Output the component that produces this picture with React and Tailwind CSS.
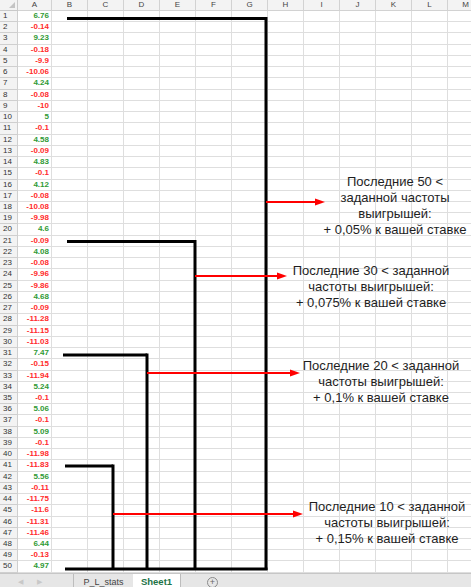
const values = [
  '6.76', '-0.14', '9.23', '-0.18', '-9.9', '-10.06', '4.24', '-0.08', '-10', '5',
  '-0.1', '4.58', '-0.09', '4.83', '-0.1', '4.12', '-0.08', '-10.08', '-9.98', '4.6',
  '-0.09', '4.08', '-0.08', '-9.96', '-9.86', '4.68', '-0.09', '-11.28', '-11.15', '-11.03',
  '7.47', '-0.15', '-11.94', '5.24', '-0.1', '5.06', '-0.1', '5.09', '-0.1', '-11.98',
  '-11.83', '5.56', '-0.11', '-11.75', '-11.6', '-11.31', '-11.46', '6.44', '-0.13', '4.97',
];

const cols = [
  { l: 'A', w: 'w-[34px]' },
  { l: 'B', w: 'w-[36px]' },
  { l: 'C', w: 'w-[36px]' },
  { l: 'D', w: 'w-[36px]' },
  { l: 'E', w: 'w-[36px]' },
  { l: 'F', w: 'w-[36px]' },
  { l: 'G', w: 'w-[36px]' },
  { l: 'H', w: 'w-[36px]' },
  { l: 'I', w: 'w-[36px]' },
  { l: 'J', w: 'w-[36px]' },
  { l: 'K', w: 'w-[36px]' },
  { l: 'L', w: 'w-[36px]' },
  { l: 'M', w: 'w-[36px]' },
];

const notes = [
  {
    pos: 'left-[310px] top-[174px]',
    lines: ['Последние 50 <', 'заданной частоты', 'выигрышей:', '+ 0,05% к вашей ставке'],
  },
  {
    pos: 'left-[286px] top-[263px]',
    lines: ['Последние 30 < заданной', 'частоты выигрышей:', '+ 0,075% к вашей ставке'],
  },
  {
    pos: 'left-[296px] top-[358px]',
    lines: ['Последние 20 < заданной', 'частоты выигрышей:', '+ 0,1% к вашей ставке'],
  },
  {
    pos: 'left-[302px] top-[499px]',
    lines: ['Последние 10 < заданной', 'частоты выигрышей:', '+ 0,15% к вашей ставке'],
  },
];

// bracket lines: [x1, y1, x2, y2]
const brackets = [
  [67, 18.5, 266, 18.5], [266, 17, 266, 570], [65, 569, 267.5, 569],
  [67, 241.5, 195, 241.5], [195, 240, 195, 569],
  [63, 355, 147, 355], [147, 353.5, 147, 569],
  [65, 466, 113, 466], [113, 464.5, 113, 569],
];

// arrows: [x from, x tip, y]
const arrows = [
  [266, 325, 202],
  [195, 287, 276],
  [147, 300, 373],
  [113, 303, 514],
];

const Sheet = () => (
  <div className="flex flex-col">
    <div className="flex h-[11px]">
      <div className="relative w-[18px] shrink-0 bg-[#f3f3f3] border-r border-b border-[#c9c9c9]">
        <div className="absolute right-[2px] bottom-[2px] w-0 h-0 border-l-[6px] border-l-transparent border-b-[6px] border-b-[#c4c4c4]" />
      </div>
      {cols.map((c) => (
        <div
          key={c.l}
          className={`${c.w} shrink-0 bg-[#f3f3f3] border-r border-b border-[#d2d2d2] text-[8px] leading-[10px] text-center text-[#444]`}
        >
          {c.l}
        </div>
      ))}
    </div>
    {values.map((v, i) => (
      <div key={i} className="flex h-[11.24px]">
        <div className="w-[18px] shrink-0 bg-[#f3f3f3] border-r border-b border-[#cfcfcf] pl-[3px] text-[8px] leading-[10px] text-[#333]">
          {i + 1}
        </div>
        {cols.map((c, j) => (
          <div
            key={c.l}
            className={`${c.w} shrink-0 border-r border-b border-[#dedede] ${
              j === 0 ? 'pr-[2px] text-right font-bold text-[8px] leading-[10px]' : ''
            } ${j === 0 ? (v.startsWith('-') ? 'text-[#ff2b2b]' : 'text-[#2f9a35]') : ''}`}
          >
            {j === 0 ? v : null}
          </div>
        ))}
      </div>
    ))}
  </div>
);

const TabBar = () => (
  <div className="flex h-[14px] bg-[#e6e6e6] border-t border-[#c6c6c6] text-[#444]">
    <div className="w-[73px] shrink-0 flex items-start gap-[14px] pl-[18px] pt-[4px] text-[7px] leading-[8px] text-[#c8c8c8]">
      <span>◀</span>
      <span>▶</span>
    </div>
    <div className="w-[60px] shrink-0 border-l border-[#bdbdbd] text-[9px] leading-[10px] text-center pt-[3px]">P_L_stats</div>
    <div className="w-[48px] shrink-0 bg-white text-[9.5px] leading-[10px] font-bold text-center text-[#217346] pt-[3px] border-r border-[#bdbdbd]">
      Sheet1
    </div>
    <div className="pl-[26px] pt-[3px]">
      <div className="w-[11px] h-[11px] rounded-full border border-[#8a8a8a] flex items-center justify-center text-[9px] leading-none text-[#666]">
        +
      </div>
    </div>
  </div>
);

const Overlay = () => (
  <>
    <svg className="absolute inset-0 pointer-events-none" width="471" height="587">
      {brackets.map(([x1, y1, x2, y2], i) => (
        <line key={i} x1={x1} y1={y1} x2={x2} y2={y2} stroke="#000" strokeWidth="3" />
      ))}
      {arrows.map(([x1, x2, y], i) => (
        <g key={i}>
          <line x1={x1} y1={y} x2={x2 - 8} y2={y} stroke="#ff0000" strokeWidth="2" />
          <polygon points={`${x2 - 10},${y - 3.5} ${x2},${y} ${x2 - 10},${y + 3.5}`} fill="#ff0000" />
        </g>
      ))}
    </svg>
    {notes.map((n, i) => (
      <div
        key={i}
        className={`absolute ${n.pos} w-[170px] text-center text-[13px] leading-[16px] text-[#1e1e1e] whitespace-nowrap`}
      >
        {n.lines.map((t, k) => (
          <div key={k}>{t}</div>
        ))}
      </div>
    ))}
  </>
);

export default function App() {
  return (
    <div className="relative w-[471px] h-[587px] overflow-hidden bg-white font-['Liberation_Sans',Arial,sans-serif]">
      <Sheet />
      <TabBar />
      <Overlay />
    </div>
  );
}
